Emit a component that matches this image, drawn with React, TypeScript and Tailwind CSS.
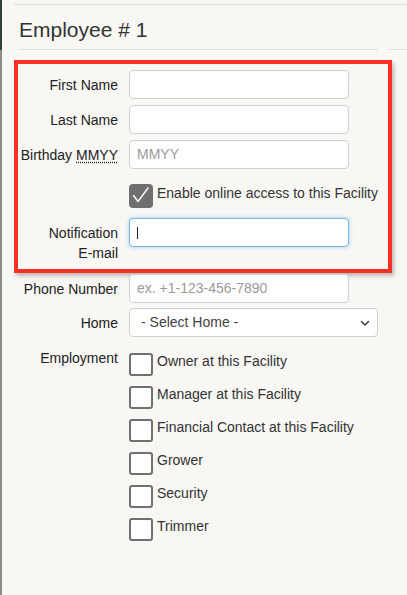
import type { ReactNode } from "react"

const font = { fontFamily: '"Liberation Sans", Arial, sans-serif' }

const ROLES = [
  "Owner at this Facility",
  "Manager at this Facility",
  "Financial Contact at this Facility",
  "Grower",
  "Security",
  "Trimmer",
]

function Row({ label, children, className = "" }: { label: ReactNode; children: ReactNode; className?: string }) {
  return (
    <div className={`flex items-start ${className}`}>
      <div className="w-[104px] shrink-0 pt-[5px] text-right text-[14px] leading-[20px] text-[#222]">
        {label}
      </div>
      <div className="ml-[11px]">{children}</div>
    </div>
  )
}

function TextInput({ placeholder, focused }: { placeholder?: string; focused?: boolean }) {
  return (
    <div
      className={`relative flex h-[29px] w-[220px] items-center rounded-[4px] border bg-white pl-[7px] text-[14px] ${
        focused
          ? "border-[#7ab8ea] shadow-[0_0_4px_rgba(102,175,233,0.6)]"
          : "border-[#cfcfcf]"
      }`}
    >
      {placeholder && <span className="text-[#9a9a9a]">{placeholder}</span>}
      {focused && <span className="h-[12px] w-px bg-[#222]" />}
    </div>
  )
}

function Box({ checked }: { checked?: boolean }) {
  if (checked) {
    return (
      <div className="flex h-[24px] w-[24px] shrink-0 items-center justify-center rounded-[4px] bg-[#6f6f6f]">
        <svg width="24" height="24" viewBox="0 0 24 24" fill="none">
          <path d="M4.5 11.5 L9 17.5 L19 4" stroke="#fff" strokeWidth="1.4" strokeLinecap="round" strokeLinejoin="round" />
        </svg>
      </div>
    )
  }
  return <div className="h-[23px] w-[24px] shrink-0 rounded-[3px] border-2 border-[#707070] bg-white" />
}

export default function App() {
  return (
    <div className="flex h-[595px] w-full overflow-hidden bg-[#f8f7f4]" style={font}>
      {/* window edge */}
      <div className="flex w-[2px] shrink-0 flex-col">
        <div className="h-[50px] bg-[#34413b]" />
        <div className="flex-1 bg-[#8d8d8d]" />
      </div>

      <div className="ml-[12px] mt-[4px] flex-1 border-t border-[#dcdcdc]">
        <div className="flex">
          <div className="ml-[5px] w-[359px] border-b border-[#dedede] pb-[7px] pt-[13px]">
            <h1 className="text-[21px] leading-[24px] text-[#333]">Employee # 1</h1>
          </div>
          <div className="ml-[11px] flex-1 border-b border-[#dedede]" />
        </div>

        <div className="mt-[10px] w-[378px]">
          {/* highlighted section */}
          <div className="border-4 border-[#fb2f25] pb-[6px] pt-[6px] shadow-[2px_3px_4px_rgba(0,0,0,0.25)]">
            <div className="-ml-[4px] flex flex-col">
              <Row label="First Name">
                <TextInput />
              </Row>
              <Row label="Last Name" className="mt-[6px]">
                <TextInput />
              </Row>
              <Row
                className="mt-[6px]"
                label={
                  <>
                    Birthday{" "}
                    <abbr title="Month and year" className="underline decoration-dotted underline-offset-2">
                      MMYY
                    </abbr>
                  </>
                }
              >
                <TextInput placeholder="MMYY" />
              </Row>
              <div className="ml-[115px] mt-[15px] flex items-start gap-[4px]">
                <Box checked />
                <span className="-mt-[1px] text-[14px] leading-[20px] text-[#333]">
                  Enable online access to this Facility
                </span>
              </div>
              <Row label={<>Notification<br />E-mail</>} className="mt-[10px]">
                <TextInput focused />
              </Row>
            </div>
          </div>

          <Row label="Phone Number" className="mt-[1px]">
            <TextInput placeholder="ex. +1-123-456-7890" />
          </Row>
          <Row label="Home" className="mt-[5px]">
            <div className="flex h-[29px] w-[249px] items-center justify-between rounded-[4px] border border-[#cfcfcf] bg-white pl-[11px] pr-[7px] text-[14px] text-[#444]">
              <span>- Select Home -</span>
              <svg width="10" height="8" viewBox="0 0 10 8" fill="none">
                <path d="M1.5 2.5 L5 6 L8.5 2.5" stroke="#444" strokeWidth="1.6" strokeLinecap="round" strokeLinejoin="round" />
              </svg>
            </div>
          </Row>

          <div className="mt-[11px] flex items-start">
            <div className="w-[104px] shrink-0 text-right text-[14px] leading-[20px] text-[#222]">Employment</div>
            <div className="ml-[11px] flex flex-col">
              {ROLES.map((r) => (
                <div key={r} className="flex h-[33px] items-start gap-[4px] pt-[5px]">
                  <Box />
                  <span className="-mt-[2px] text-[14px] leading-[20px] text-[#333]">{r}</span>
                </div>
              ))}
            </div>
          </div>
        </div>
      </div>
    </div>
  )
}
